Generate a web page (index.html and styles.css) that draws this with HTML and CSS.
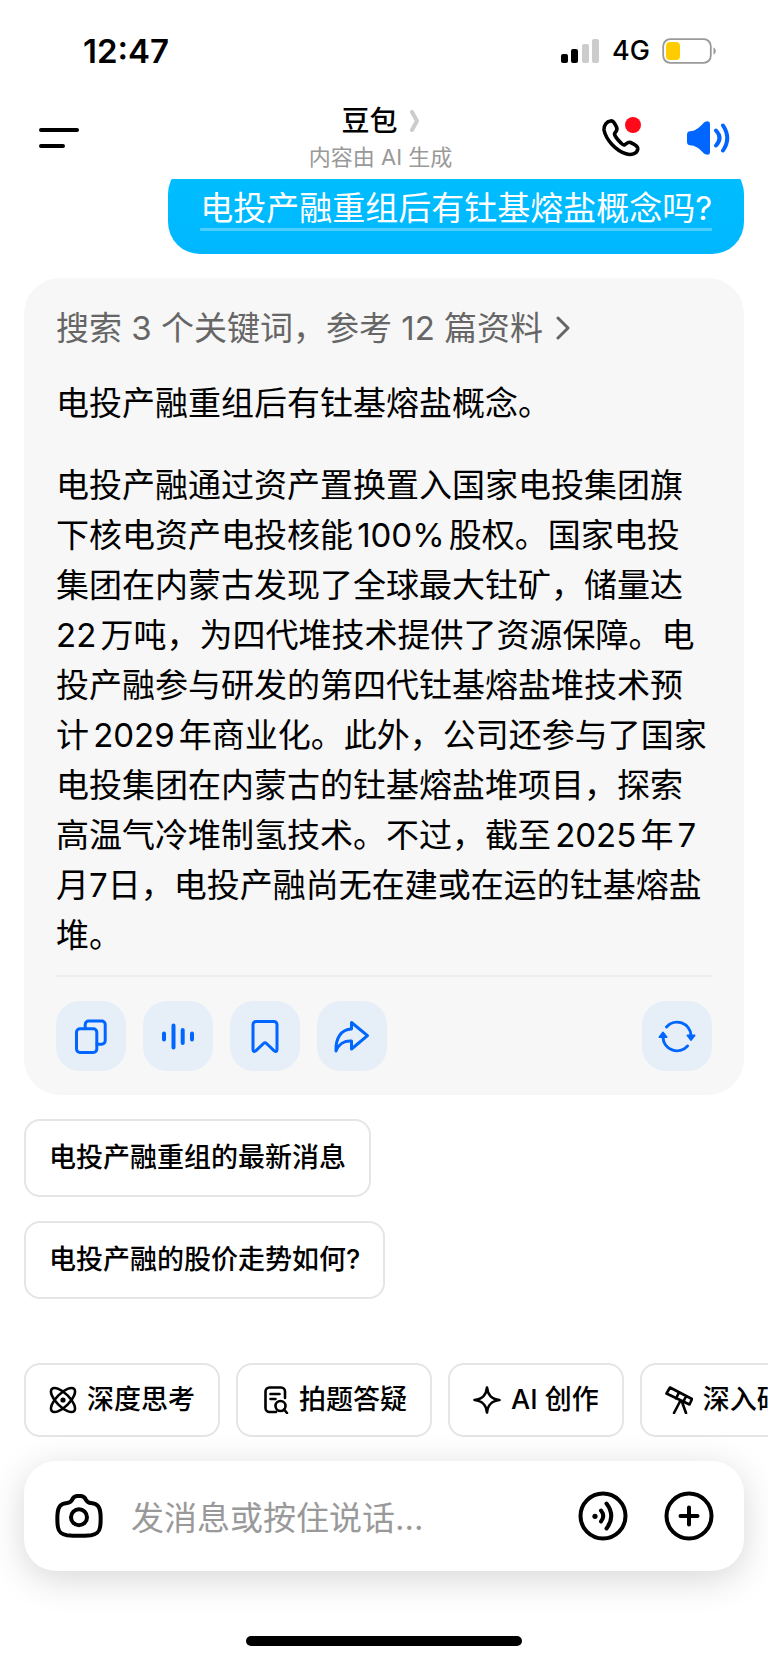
FILE: index.html
```html
<!DOCTYPE html>
<html lang="zh-CN">
<head>
  <meta charset="UTF-8" />
  <meta name="viewport" content="width=device-width, initial-scale=1.0"/>
  <title>豆包</title>
  <link rel="stylesheet" href="styles.css">
</head>
<body>
<div class="app">

  <!-- Status bar -->
  <div class="status-bar">
    <span class="time">12:47</span>
    <div class="status-icons">
      <svg width="40" height="26" viewBox="0 0 40 26">
        <rect x="1" y="16" width="7" height="9" rx="2"/>
        <rect x="11" y="11" width="7" height="14" rx="2"/>
        <rect x="22" y="6" width="7" height="19" rx="2" fill="#ccc"/>
        <rect x="32" y="1" width="7" height="24" rx="2" fill="#ccc"/>
      </svg>
      <span class="network">4G</span>
      <svg width="56" height="26" viewBox="0 0 56 26">
        <rect x="1.2" y="1.2" width="47.6" height="23.6" rx="7" fill="none" stroke="#999" stroke-width="1.8"/>
        <rect x="4" y="4" width="14" height="18" rx="4" fill="#fc0"/>
        <path d="M51.500 9.500c3 1 3 6 0 7z" fill="#999"/>
      </svg>
    </div>
  </div>

  <!-- Header -->
  <header class="header">
    <button class="icon-btn" aria-label="菜单">
      <svg width="40" height="22" viewBox="0 0 40 22" fill="none" stroke="#000" stroke-width="4" stroke-linecap="round">
        <path d="M2 3h36M2 19h22"/>
      </svg>
    </button>
    <div class="header-title">
      <h1>豆包
        <svg width="10" height="22" viewBox="0 0 10 22" fill="none" stroke="#ccc" stroke-width="4" stroke-linecap="round" stroke-linejoin="round">
          <path d="M2 2l5 9-5 9"/>
        </svg>
      </h1>
      <p>内容由 AI 生成</p>
    </div>
    <div class="header-actions">
      <button class="icon-btn call" aria-label="通话">
        <svg width="40" height="40" viewBox="0 0 40 40" fill="none" stroke="#000" stroke-width="3.6" stroke-linejoin="round">
          <path d="M9.500 3C12 2.500 13 4 15.500 9C17 12 15.500 12.500 13.500 15.500C12.500 17.500 21.500 27.500 23.500 27C26 25.500 27 23.500 29.500 24.500C34 26.500 37 28.500 36.800 31C36 36 30 37.500 25 35.800C15 32.500 5 22 3 12C2.500 7 6 3.500 9.500 3z"/>
        </svg>
        <span class="dot"></span>
      </button>
      <button class="icon-btn" aria-label="朗读">
        <svg width="44" height="36" viewBox="0 0 44 36">
          <path d="M1 14.500Q1 11.500 4 11.300C9 11 12.500 8.500 17.500 3C19.500 1 24 0 24 4V32C24 36 19.500 35 17.500 33C12.500 27.500 9 25.500 4 25.200Q1 25 1 22z" fill="#06f"/>
          <path d="M30 10.500q7 7.500 0 15M37 5.500q8.500 12.500 0 25" fill="none" stroke="#06f" stroke-width="4" stroke-linecap="round"/>
        </svg>
      </button>
    </div>
  </header>

  <!-- Conversation -->
  <main class="chat">
    <div class="bubble"><a href="#">电投产融重组后有钍基熔盐概念吗?</a></div>

    <article class="answer">
      <a class="sources" href="#">搜索 3 个关键词，参考 12 篇资料
        <svg width="16" height="24" viewBox="0 0 16 24" fill="none" stroke="#666" stroke-width="3" stroke-linecap="round" stroke-linejoin="round">
          <path d="M3 2l10 10L3 22"/>
        </svg>
      </a>
      <p>电投产融重组后有钍基熔盐概念。</p>
      <p>电投产融通过资产置换置入国家电投集团旗下核电资产电投核能100%股权。国家电投<br>集团在内蒙古发现了全球最大钍矿，储量达<br>22万吨，为四代堆技术提供了资源保障。电投产融参与研发的第四代钍基熔盐堆技术预计2029年商业化。此外，公司还参与了国家电投集团在内蒙古的钍基熔盐堆项目，探索<br>高温气冷堆制氢技术。不过，截至2025年7<br><span class="day">月7日</span>，电投产融尚无在建或在运的钍基熔盐<br>堆。</p>

      <div class="actions">
        <button aria-label="复制">
          <svg width="36" height="36" viewBox="0 0 36 36">
            <rect x="3.500" y="10.700" width="20.300" height="23.800" rx="3.500"/>
            <path d="M12.200 10.500V6.500a3.500 3.500 0 0 1 3.500-3.500h13a3.500 3.500 0 0 1 3.500 3.500v16.200a3.500 3.500 0 0 1-3.500 3.500H24"/>
          </svg>
        </button>
        <button aria-label="语音">
          <svg width="36" height="36" viewBox="0 0 36 36">
            <path stroke-width="4" d="M4 15.500v6M13.500 7.500v22M22.700 12v13M32 15.500v6"/>
          </svg>
        </button>
        <button aria-label="收藏">
          <svg width="36" height="36" viewBox="0 0 36 36">
            <path d="M6 6.500a3 3 0 0 1 3-3h18a3 3 0 0 1 3 3v25c0 2-1.500 2.500-3 1.200l-7.500-7.200q-1.500-1.500-3 0L9 32.700c-1.500 1.300-3 .8-3-1.200z"/>
          </svg>
        </button>
        <button aria-label="分享">
          <svg width="36" height="36" viewBox="0 0 36 36">
            <path d="M17.500 4.500l16 13.200-16 13.300v-8c-7-.5-13 3-15.500 10C1.500 20 7 11.500 17.500 11z"/>
          </svg>
        </button>
        <button class="refresh" aria-label="重新生成">
          <svg width="38" height="36" viewBox="0 0 38 36">
            <path d="M8.500 8.900A14 14 0 0 1 33 17.500M5 19A14 14 0 0 0 29.500 28"/>
            <path fill="#06f" stroke-width="2" d="M29.500 17.500h7l-3.500 4.500zM1.500 19h7l-3.500-4.500z"/>
          </svg>
        </button>
      </div>
    </article>

    <div class="suggestions">
      <button>电投产融重组的最新消息</button>
      <button>电投产融的股价走势如何?</button>
    </div>
  </main>

  <!-- Shortcuts -->
  <nav class="shortcuts">
    <button>
      <svg width="28" height="28" viewBox="0 0 28 28">
        <ellipse cx="14" cy="14" rx="15.700" ry="6.500" transform="rotate(45 14 14)"/>
        <ellipse cx="14" cy="14" rx="15.700" ry="6.500" transform="rotate(-45 14 14)"/>
        <circle cx="14" cy="14" r="1.300"/>
      </svg>
      深度思考
    </button>
    <button>
      <svg width="28" height="28" viewBox="0 0 28 28">
        <path d="M15 26H8.500a4 4 0 0 1-4-4V5.500a4 4 0 0 1 4-4H20a4 4 0 0 1 4 4V12M9.500 8h9M9.500 13h5"/>
        <circle cx="19.500" cy="20" r="5"/>
        <path d="M23 23.500l3 3.500"/>
      </svg>
      拍题答疑
    </button>
    <button>
      <svg width="28" height="28" viewBox="0 0 28 28">
        <path d="M14 1.500C14.800 9 18 13 26.500 14C18 15 14.800 19 14 26.500C13.200 19 10 15 1.500 14C10 13 13.200 9 14 1.500z"/>
      </svg>
      AI 创作
    </button>
    <button>
      <svg width="28" height="28" viewBox="0 0 28 28">
        <path d="M5 1.500L27 13l-2.500 5.500L1.500 7.500zM14 6.500l-3 6M21 10l-2.500 5.500M15.500 14.500L9 27M16.500 14.500L21 27"/>
      </svg>
      深入研究
    </button>
  </nav>

  <!-- Message input -->
  <form class="composer">
    <button type="button" class="icon-btn" aria-label="拍照">
      <svg width="48" height="48" viewBox="0 0 48 48" fill="none" stroke="#000" stroke-width="4" stroke-linejoin="round">
        <path d="M17 8Q18.500 4.200 22 4h4Q29.500 4.200 31 8Q32.500 10.700 36 11C43 11.700 45 15 45.500 22Q46 30 45 35.500C44 41 41 42.500 36 43.200Q24 44.500 12 43.200C7 42.500 4 41 3 35.500Q2 30 2.500 22C3 15 5 11.700 12 11Q15.500 10.700 17 8z"/>
        <circle cx="24" cy="25.300" r="8"/>
      </svg>
    </button>
    <input type="text" class="message" placeholder="发消息或按住说话..." aria-label="发消息"/>
    <button type="button" class="icon-btn" aria-label="语音输入">
      <svg width="50" height="50" viewBox="0 0 50 50" fill="none" stroke="#000" stroke-width="4" stroke-linecap="round">
        <circle cx="25" cy="25" r="22.500"/>
        <circle cx="17" cy="25.300" r="2.600" fill="#000" stroke="none"/>
        <path d="M23 19.500q4.500 5.500 0 11M28.500 12.500q9.500 12.500 0 25"/>
      </svg>
    </button>
    <button type="button" class="icon-btn" aria-label="更多">
      <svg width="50" height="50" viewBox="0 0 50 50" fill="none" stroke="#000" stroke-width="4" stroke-linecap="round">
        <circle cx="25" cy="25" r="22.500"/>
        <path d="M25 16.500v17M16.500 25h17"/>
      </svg>
    </button>
  </form>

  <div class="home-bar"></div>
</div>
</body>
</html>
```
FILE: styles.css
```css
* {
  box-sizing: border-box;
  margin: 0;
  padding: 0;
}

body {
  background: #fff;
  color: #000;
  font-family: Inter, "Noto Sans CJK SC", sans-serif;
  font-size: 33px;
  line-height: 50px;
}

button, input {
  font: inherit;
  color: inherit;
  border: none;
  background: none;
}

button {
  cursor: pointer;
}

a {
  color: inherit;
  text-decoration: none;
}

svg {
  display: block;
  flex: none;
}

.app {
  display: flex;
  flex-direction: column;
  min-height: 100vh;
  overflow: hidden;
}

/* status bar */
.status-bar {
  display: flex;
  align-items: center;
  justify-content: space-between;
  height: 102px;
  padding: 0 50px 0 83px;
}

.time {
  font-size: 33px;
  font-weight: 600;
}

.status-icons {
  display: flex;
  align-items: center;
  gap: 12px;
}

.network {
  font-size: 27px;
  font-weight: 500;
}

/* header */
.header {
  display: grid;
  grid-template-columns: 1fr auto 1fr;
  align-items: center;
  height: 77px;
  padding: 0 38px 8px 39px;
}

.icon-btn {
  flex: none;
}

.header-title {
  padding-right: 8px;
  text-align: center;
}

.header-title h1 {
  display: flex;
  align-items: center;
  justify-content: center;
  gap: 12px;
  font-size: 28px;
  font-weight: 500;
  line-height: 38px;
}

.header-title p {
  color: #999;
  font-size: 22px;
  line-height: 34px;
}

.header-actions {
  display: flex;
  align-items: center;
  justify-content: flex-end;
  gap: 45px;
}

.call {
  position: relative;
}

.dot {
  position: absolute;
  top: -1px;
  right: 0;
  width: 16px;
  height: 16px;
  border-radius: 50%;
  background: #ff0a1b;
}

/* conversation */
.chat {
  display: flex;
  flex-direction: column;
  padding: 0 24px;
  overflow: hidden;
}

.bubble {
  align-self: flex-end;
  margin-top: -17px;
  padding: 21px 32px;
  border-radius: 32px;
  background: linear-gradient(#00bfff, #00b7ff);
  color: #fff;
}

.bubble a {
  text-decoration: underline 3px rgba(255, 255, 255, 0.3);
  text-underline-offset: 8px;
  text-decoration-skip-ink: none;
}

.answer {
  margin-top: 24px;
  padding: 25px 32px 24px;
  border-radius: 36px;
  background: #f7f7f7;
}

.sources {
  display: flex;
  align-items: center;
  gap: 12px;
  margin-bottom: 25px;
  color: #666;
}

.answer p {
  margin-bottom: 32px;
  text-autospace: normal;
}

.answer p:last-of-type {
  margin-bottom: 15px;
}

.day {
  text-autospace: no-autospace;
}

.actions {
  display: flex;
  gap: 17px;
  padding-top: 24px;
  border-top: 2px solid #eee;
}

.actions button {
  display: flex;
  align-items: center;
  justify-content: center;
  width: 70px;
  height: 70px;
  border-radius: 24px;
  background: #e6eff7;
}

.actions svg {
  fill: none;
  stroke: #06f;
  stroke-width: 3;
  stroke-linecap: round;
  stroke-linejoin: round;
}

.actions .refresh {
  margin-left: auto;
}

.suggestions {
  display: flex;
  flex-direction: column;
  align-items: flex-start;
  gap: 24px;
  margin-top: 24px;
}

.suggestions button,
.shortcuts button {
  border: 2px solid #e5e5e5;
  border-radius: 16px;
  background: #fff;
  font-size: 27px;
  font-weight: 500;
}

.suggestions button {
  height: 78px;
  padding: 0 23px;
}

/* shortcuts */
.shortcuts {
  display: flex;
  gap: 16px;
  margin-top: 64px;
  padding: 0 24px;
}

.shortcuts button {
  display: flex;
  flex: none;
  align-items: center;
  gap: 10px;
  height: 74px;
  padding: 0 23px;
}

.shortcuts svg {
  fill: none;
  stroke: #000;
  stroke-width: 2.6;
  stroke-linecap: round;
  stroke-linejoin: round;
}

/* message input */
.composer {
  display: flex;
  align-items: center;
  gap: 36px;
  height: 110px;
  margin: 24px 24px 0;
  padding: 0 30px 0 31px;
  border-radius: 32px;
  background: #fff;
  box-shadow: 0 8px 36px rgba(0, 0, 0, 0.16);
}

.message {
  flex: 1;
  min-width: 0;
  margin-left: -8px;
  padding-top: 4px;
  outline: none;
}

.message::placeholder {
  color: #999;
  opacity: 1;
}

.home-bar {
  width: 36%;
  height: 10px;
  margin: auto auto 17px;
  border-radius: 5px;
  background: #000;
}
```
